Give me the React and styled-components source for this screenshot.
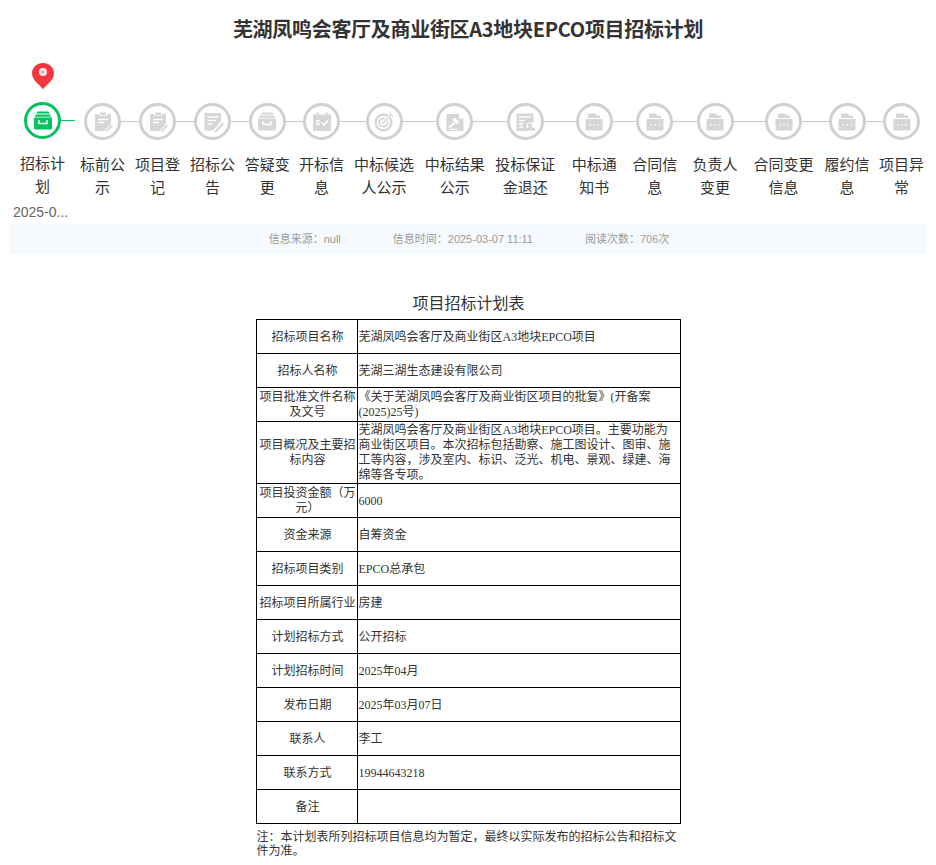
import React from 'react';
import styled, { createGlobalStyle } from 'styled-components';

const sans = '"Noto Sans CJK SC", "Noto Sans", sans-serif';
const latinSans = '"Liberation Sans", "Noto Sans CJK SC", sans-serif';

const GlobalStyle = createGlobalStyle`
  html, body {
    margin: 0;
    padding: 0;
    background: #fff;
    font-family: ${sans};
  }
`;

const Page = styled.div`
  width: 936px;
  padding: 0 9px;
  box-sizing: border-box;
`;

const Title = styled.h1`
  margin: 0;
  height: 58px;
  line-height: 58px;
  font-size: 20px;
  font-weight: 700;
  letter-spacing: -0.3px;
  text-align: center;
  color: #333;
`;

const Steps = styled.div`
  display: flex;
  height: 166px;
  padding-left: 1px;
`;

const Step = styled.div`
  flex: 0 0 ${(p) => p.$width}px;
  display: flex;
  flex-direction: column;
  align-items: center;
`;

const PinSlot = styled.div`
  height: 45px;
  box-sizing: border-box;
  padding-bottom: 11px;
  display: flex;
  align-items: flex-end;
  justify-content: center;
`;

const Track = styled.div`
  position: relative;
  width: 37px;
  height: 37px;
`;

const Line = styled.span`
  position: absolute;
  top: 18px;
  left: 36px;
  height: 1px;
  background: ${(p) => (p.$active ? '#07c160' : '#c8c8c8')};
`;

const Circle = styled.div`
  position: relative;
  width: 37px;
  height: 37px;
  box-sizing: border-box;
  border: 3px solid ${(p) => (p.$active ? '#07c160' : '#d0d0d0')};
  border-radius: 50%;
  background: #fff;
  color: ${(p) => (p.$active ? '#07c160' : '#d6d6d6')};
  display: flex;
  align-items: center;
  justify-content: center;
`;

const Label = styled.div`
  width: ${(p) => p.$chars * 15}px;
  margin-top: 12px;
  font-size: 15px;
  line-height: 23px;
  text-align: center;
  color: #333;
`;

const StepTime = styled.div`
  align-self: flex-start;
  margin: 4px 0 0 3px;
  font-family: ${latinSans};
  font-size: 14px;
  line-height: 23px;
  color: #666;
  white-space: nowrap;
`;

const InfoBar = styled.div`
  height: 30px;
  box-sizing: border-box;
  padding: 0 0 3px 2px;
  display: flex;
  align-items: center;
  justify-content: center;
  gap: 52px;
  background: #f6f9fe;
  border-radius: 3px;
  font-family: ${latinSans};
  font-size: 11px;
  color: #999;
`;

const Article = styled.div`
  width: 425px;
  margin: 0 auto;
  padding-top: 37px;
`;

const Caption = styled.div`
  height: 28px;
  padding-left: 1px;
  line-height: 22px;
  font-size: 16px;
  text-align: center;
  color: #333;
`;

const Table = styled.table`
  width: 425px;
  table-layout: fixed;
  border-collapse: collapse;
  font-family: "Liberation Serif", "Noto Sans CJK SC", serif;
  font-size: 12px;
  line-height: 15px;
  color: #333;
`;

const Row = styled.tr`
  height: ${(p) => p.$height || 34}px;
`;

const Head = styled.td`
  width: 98px;
  padding: 1px 0 0 2px;
  border: 1px solid #000;
  text-align: center;
`;

const Cell = styled.td`
  padding: 1px 1px 0;
  border: 1px solid #000;
`;

const Note = styled.p`
  width: 422px;
  margin: 5px 0 0 1px;
  font-size: 12px;
  line-height: 14px;
  color: #333;
`;

const Pin = () => (
  <svg width="24" height="29" viewBox="0 0 24 29">
    <path d="M12 28.500 L18.500 21 L5.500 21 Z" fill="#e6e6e6" />
    <path
      d="M12 27 C10 24 1 18.500 1 11.500 C1 5.200 6 1 12 1 C18 1 23 5.200 23 11.500 C23 18.500 14 24 12 27 Z"
      fill="#f4373c"
    />
    <circle cx="12" cy="10" r="4" fill="#fff" opacity="0.9" />
    <circle cx="12" cy="10" r="1.600" fill="#f6a0a2" />
  </svg>
);

// Icons are drawn on a 22 box, the cut-outs take the white of the circle
const icons = {
  box: (
    <>
      <path d="M5.500 1.500h11l1 2h-13z" />
      <path d="M4 4.500h14l1 2.200H3z" />
      <path d="M2 7.500h18v10.500a1.500 1.500 0 0 1-1.500 1.500h-15A1.500 1.500 0 0 1 2 18z" />
      <path d="M7 10v3.500h8V10" fill="none" stroke="#fff" strokeWidth="1.500" />
    </>
  ),
  clip: (
    <>
      <path d="M3 3h4v1.800h8V3h4v9.500L12.500 20H3z" />
      <path d="M8 1.500h6v2.500H8z" />
      <path d="M6 8.500h10M6 11.500h6" stroke="#fff" strokeWidth="1.300" fill="none" />
      <path d="M14 19.500l5.500-6 1.500 1.500-5.500 5.500h-1.500z" />
    </>
  ),
  doc: (
    <>
      <path d="M2.500 2h16.500v8L11 19.500H2.500z" />
      <path d="M5.500 6h11M5.500 9.500h8.500M5.500 13h5" stroke="#fff" strokeWidth="1.300" fill="none" />
      <path d="M12.500 20l8-8.500 1.500 1.500-8 8.500h-1.500z" />
    </>
  ),
  board: (
    <>
      <path d="M5.500 1.500h2V4h-2zM14.500 1.500h2V4h-2z" />
      <path d="M2 3.500h18V20H2z" />
      <path d="M5 10h4M5 13h4" stroke="#fff" strokeWidth="1.300" fill="none" />
      <path d="M10.500 11.500l2.500 2.500 4-4.500" stroke="#fff" strokeWidth="1.600" fill="none" />
    </>
  ),
  target: (
    <>
      <circle cx="10.500" cy="11.500" r="8" fill="none" stroke="currentColor" strokeWidth="2.400" />
      <circle cx="10.500" cy="11.500" r="4.200" fill="none" stroke="currentColor" strokeWidth="1.800" />
      <circle cx="10.500" cy="11.500" r="1.400" />
      <path d="M10.500 11.500L18 4" stroke="#fff" strokeWidth="2.500" fill="none" />
      <path d="M10.500 11.500L18.500 3.500M16.500 2l3.500 3.500" stroke="currentColor" strokeWidth="1.200" fill="none" />
    </>
  ),
  gavel: (
    <>
      <path d="M2.500 3h12.500l4.500 4.500V20h-17z" />
      <path d="M15 2.500v5h5z" fill="#fff" />
      <path d="M5 16.500l5.500-4.500" stroke="#fff" strokeWidth="2" fill="none" />
      <path d="M9.500 7.500l4.500 5" stroke="#fff" strokeWidth="3.200" fill="none" />
      <path d="M5 18.300h8" stroke="#fff" strokeWidth="1.200" fill="none" />
    </>
  ),
  stamp: (
    <>
      <path d="M2.500 2.500h17v9h-5l-2 2v3l-1 3.500h-9z" />
      <path d="M5 6h12M5 9.500h6M5 13h4M5 16h4" stroke="#fff" strokeWidth="1.300" fill="none" />
      <path d="M16 12a2.300 2.300 0 0 1 2.300 2.300c0 1-.6 1.500-.6 2.500h3.300v3h-10v-3h3.300c0-1-.6-1.500-.6-2.500A2.300 2.300 0 0 1 16 12z" />
    </>
  ),
  folder: (
    <>
      <path d="M5 2.500h7l1.500 2h3.500v2.500H5z" />
      <path d="M2.500 8h17v10.500a1 1 0 0 1-1 1h-15a1 1 0 0 1-1-1z" />
      <path d="M6.500 14h1.500M10.250 14h1.500M14 14h1.500" stroke="#fff" strokeWidth="1.500" fill="none" />
    </>
  ),
};

const Icon = ({ name }) => (
  <svg width="22" height="22" viewBox="0 0 22 22" fill="currentColor">
    {icons[name]}
  </svg>
);

const steps = [
  { label: '招标计划', width: 65, chars: 3, icon: 'box', active: true, time: '2025-0...' },
  { label: '标前公示', width: 55, chars: 3, icon: 'clip' },
  { label: '项目登记', width: 55, chars: 3, icon: 'clip' },
  { label: '招标公告', width: 55, chars: 3, icon: 'doc' },
  { label: '答疑变更', width: 54.5, chars: 3, icon: 'box' },
  { label: '开标信息', width: 54, chars: 3, icon: 'board' },
  { label: '中标候选人公示', width: 71, chars: 4, icon: 'target' },
  { label: '中标结果公示', width: 70.5, chars: 4, icon: 'gavel' },
  { label: '投标保证金退还', width: 70.5, chars: 4, icon: 'stamp' },
  { label: '中标通知书', width: 67.5, chars: 3, icon: 'folder' },
  { label: '合同信息', width: 53.5, chars: 3, icon: 'folder' },
  { label: '负责人变更', width: 67, chars: 3, icon: 'folder' },
  { label: '合同变更信息', width: 70, chars: 4, icon: 'folder' },
  { label: '履约信息', width: 57, chars: 3, icon: 'folder' },
  { label: '项目异常', width: 52, chars: 3, icon: 'folder' },
];

const rows = [
  ['招标项目名称', '芜湖凤鸣会客厅及商业街区A3地块EPCO项目'],
  ['招标人名称', '芜湖三湖生态建设有限公司'],
  ['项目批准文件名称及文号', '《关于芜湖凤鸣会客厅及商业街区项目的批复》(开备案(2025)25号)'],
  [
    '项目概况及主要招标内容',
    '芜湖凤鸣会客厅及商业街区A3地块EPCO项目。主要功能为商业街区项目。本次招标包括勘察、施工图设计、图审、施工等内容，涉及室内、标识、泛光、机电、景观、绿建、海绵等各专项。',
    62,
  ],
  ['项目投资金额（万元）', '6000'],
  ['资金来源', '自筹资金'],
  ['招标项目类别', 'EPCO总承包'],
  ['招标项目所属行业', '房建'],
  ['计划招标方式', '公开招标'],
  ['计划招标时间', '2025年04月'],
  ['发布日期', '2025年03月07日'],
  ['联系人', '李工'],
  ['联系方式', '19944643218'],
  ['备注', ''],
];

const lineLength = (i) => {
  if (i === 0) return 15;
  if (i === steps.length - 1) return 0;
  return (steps[i].width + steps[i + 1].width) / 2 - 36;
};

const App = () => (
  <Page>
    <GlobalStyle />
    <Title>芜湖凤鸣会客厅及商业街区A3地块EPCO项目招标计划</Title>
    <Steps>
      {steps.map((step, i) => (
        <Step key={step.label} $width={step.width}>
          <PinSlot>{step.active && <Pin />}</PinSlot>
          <Track>
            {lineLength(i) > 0 && <Line $active={step.active} style={{ width: lineLength(i) }} />}
            <Circle $active={step.active}>
              <Icon name={step.icon} />
            </Circle>
          </Track>
          <Label $chars={step.chars}>{step.label}</Label>
          {step.time && <StepTime>{step.time}</StepTime>}
        </Step>
      ))}
    </Steps>
    <InfoBar>
      <span>信息来源：null</span>
      <span>信息时间：2025-03-07 11:11</span>
      <span>阅读次数：706次</span>
    </InfoBar>
    <Article>
      <Caption>项目招标计划表</Caption>
      <Table>
        <tbody>
          {rows.map(([head, value, height]) => (
            <Row key={head} $height={height}>
              <Head>{head}</Head>
              <Cell>{value}</Cell>
            </Row>
          ))}
        </tbody>
      </Table>
      <Note>注：本计划表所列招标项目信息均为暂定，最终以实际发布的招标公告和招标文件为准。</Note>
    </Article>
  </Page>
);

export default App;
